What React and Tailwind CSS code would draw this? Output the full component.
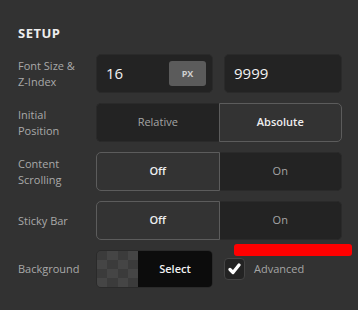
const font = { fontFamily: '"Open Sans", "Liberation Sans", sans-serif' };

const Label = ({ children }) => (
  <div className="w-[78px] shrink-0 text-[11px] leading-[16px] text-[#a9a9a9]">{children}</div>
);

const Toggle = ({ left, right, active }) => (
  <div className="flex h-[39px] w-[246px] text-[11px]">
    <div
      className={
        active === "left"
          ? "flex flex-1 items-center justify-center rounded-l-[5px] border border-[#5c5c5c] bg-[#333333] font-semibold text-[#eeeeee]"
          : "flex flex-1 items-center justify-center rounded-l-[5px] border border-r-0 border-[#2a2a2a] bg-[#232323] text-[#a5a5a5]"
      }
    >
      {left}
    </div>
    <div
      className={
        active === "right"
          ? "flex flex-1 items-center justify-center rounded-r-[5px] border border-[#5c5c5c] bg-[#333333] font-semibold text-[#eeeeee]"
          : "flex flex-1 items-center justify-center rounded-r-[5px] border border-l-0 border-[#2a2a2a] bg-[#232323] text-[#a5a5a5]"
      }
    >
      {right}
    </div>
  </div>
);

const Checker = () => {
  const cells = [];
  for (let r = 0; r < 4; r++) {
    for (let c = 0; c < 4; c++) {
      cells.push(
        <div key={r + "-" + c} className={(r + c) % 2 === 0 ? "bg-[#3b3b3b]" : "bg-[#454545]"} />
      );
    }
  }
  return <div className="grid h-full w-[41px] grid-cols-4 grid-rows-4">{cells}</div>;
};

export default function App() {
  return (
    <div className="relative h-[310px] w-[358px] bg-[#323232] pl-[18px] pt-[25px]" style={font}>
      <div className="text-[13px] font-bold tracking-[0.5px] text-[#eeeeee] leading-[16px]">SETUP</div>

      <div className="mt-[13px] flex flex-col gap-[10px]">
        <div className="flex items-center">
          <Label>
            Font Size &amp;
            <br />
            Z-Index
          </Label>
          <div className="flex gap-[11px]">
            <div className="flex h-[39px] w-[117px] items-center justify-between rounded-[5px] border border-[#2a2a2a] bg-[#232323] pl-[9px] pr-[6px]">
              <span className="text-[15px] text-[#f2f2f2]">16</span>
              <span className="flex h-[25px] w-[37px] items-center justify-center rounded-[3px] bg-[#5b5b5b] text-[9px] font-bold text-[#d0d0d0]">
                PX
              </span>
            </div>
            <div className="flex h-[39px] w-[118px] items-center rounded-[5px] border border-[#2a2a2a] bg-[#232323] pl-[9px]">
              <span className="text-[15px] text-[#f2f2f2]">9999</span>
            </div>
          </div>
        </div>

        <div className="flex items-center">
          <Label>
            Initial
            <br />
            Position
          </Label>
          <Toggle left="Relative" right="Absolute" active="right" />
        </div>

        <div className="flex items-center">
          <Label>
            Content
            <br />
            Scrolling
          </Label>
          <Toggle left="Off" right="On" active="left" />
        </div>

        <div className="flex items-center">
          <Label>Sticky Bar</Label>
          <Toggle left="Off" right="On" active="left" />
        </div>

        <div className="flex items-center">
          <Label>Background</Label>
          <div className="flex h-[38px] w-[117px] overflow-hidden rounded-[5px] border border-[#2a2a2a]">
            <Checker />
            <div className="flex flex-1 items-center justify-center bg-[#0c0c0c] text-[11px] font-semibold text-[#f2f2f2]">
              Select
            </div>
          </div>
          <div className="ml-[11px] flex h-[22px] w-[21px] items-center justify-center rounded-[4px] border border-[#444444] bg-[#232323]">
            <svg width="13" height="12" viewBox="0 0 13 12">
              <path d="M2 6.5 L5 9.5 L11 2" fill="none" stroke="#ffffff" strokeWidth="3.2" strokeLinecap="round" strokeLinejoin="round" />
            </svg>
          </div>
          <span className="ml-[9px] text-[11px] text-[#a5a5a5]">Advanced</span>
        </div>
      </div>

      <div className="absolute left-[234px] top-[244px] h-[12px] w-[118px] rounded-[3px] bg-[#ff0000]" />
    </div>
  );
}
